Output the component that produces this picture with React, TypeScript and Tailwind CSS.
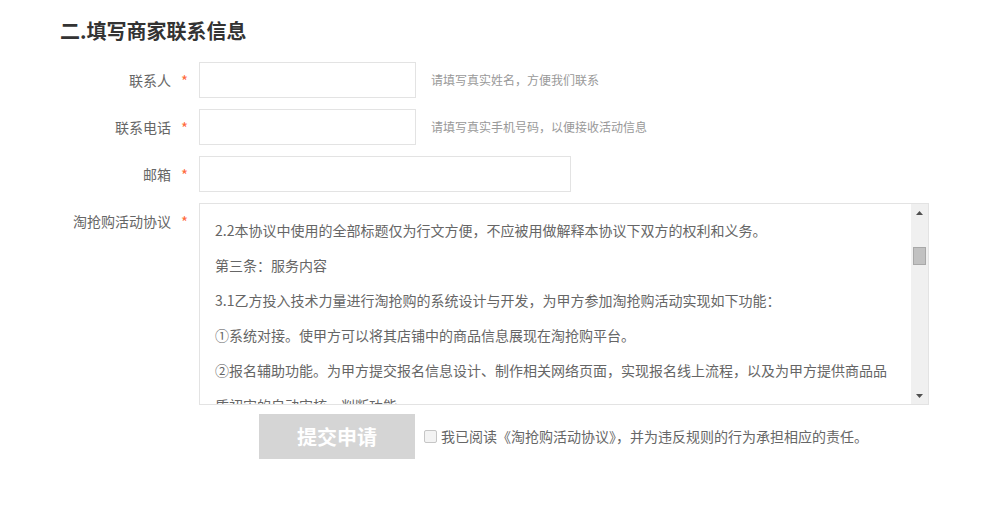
const font = {
  fontFamily: '"Noto Sans CJK SC", "Liberation Sans", sans-serif',
};

const fields = [
  { label: "联系人", width: "w-[217px]", hint: "请填写真实姓名，方便我们联系" },
  { label: "联系电话", width: "w-[217px]", hint: "请填写真实手机号码，以便接收活动信息" },
  { label: "邮箱", width: "w-[372px]", hint: "" },
];

const terms = [
  "2.2本协议中使用的全部标题仅为行文方便，不应被用做解释本协议下双方的权利和义务。",
  "第三条：服务内容",
  "3.1乙方投入技术力量进行淘抢购的系统设计与开发，为甲方参加淘抢购活动实现如下功能：",
  "①系统对接。使甲方可以将其店铺中的商品信息展现在淘抢购平台。",
  "②报名辅助功能。为甲方提交报名信息设计、制作相关网络页面，实现报名线上流程，以及为甲方提供商品品质初审的自动审核、判断功能。",
  "③活动展示。",
];

function Label({ text }: { text: string }) {
  return (
    <div className="w-[139px] shrink-0 flex justify-end items-center h-9 pr-[11px] text-[14px] text-[#666]">
      <span>{text}</span>
      <span className="ml-[10px] text-[15px] text-[#ff6a3c] leading-none">*</span>
    </div>
  );
}

function Scrollbar() {
  return (
    <div className="w-[17px] shrink-0 bg-[#f0f0f0] flex flex-col items-center">
      <div className="h-[17px] w-full flex items-center justify-center">
        <svg width="7" height="4" viewBox="0 0 7 4">
          <path d="M0 4 L3.5 0 L7 4 Z" fill="#505050" />
        </svg>
      </div>
      <div className="mt-[26px] w-[13px] h-[18px] bg-[#c1c1c1] border border-[#a8a8a8]" />
      <div className="flex-1" />
      <div className="h-[17px] w-full flex items-center justify-center">
        <svg width="7" height="4" viewBox="0 0 7 4">
          <path d="M0 0 L7 0 L3.5 4 Z" fill="#505050" />
        </svg>
      </div>
    </div>
  );
}

export default function App() {
  return (
    <div className="w-[988px] h-[518px] bg-white pl-[60px] pt-[16px]" style={font}>
      <h2 className="text-[20px] leading-[30px] font-bold text-[#333]">二.填写商家联系信息</h2>

      <div className="mt-[16px] flex flex-col gap-[11px]">
        {fields.map((f) => (
          <div key={f.label} className="flex items-center">
            <Label text={f.label} />
            <input
              className={`${f.width} h-9 border border-[#e3e3e3] outline-none px-2 text-[14px]`}
            />
            {f.hint && (
              <span className="ml-[15px] text-[12px] text-[#999]">{f.hint}</span>
            )}
          </div>
        ))}

        <div className="flex items-start">
          <Label text="淘抢购活动协议" />
          <div className="w-[730px] h-[202px] border border-[#e3e3e3] flex overflow-hidden">
            <div className="flex-1 overflow-hidden pl-[15px] pr-[14px] pt-[9px] text-[14px] leading-[35px] text-[#666]">
              {terms.map((t, i) => (
                <p key={i}>{t}</p>
              ))}
            </div>
            <Scrollbar />
          </div>
        </div>
      </div>

      <div className="mt-[9px] ml-[199px] flex items-center">
        <button className="w-[156px] h-[45px] bg-[#d5d5d5] text-white text-[20px] font-bold">
          提交申请
        </button>
        <label className="ml-[9px] flex items-center text-[14px] text-[#666]">
          <span className="w-[13px] h-[13px] border border-[#c6c6c6] rounded-[2px] bg-[#f3f3f3] mr-[4px]" />
          我已阅读《淘抢购活动协议》，并为违反规则的行为承担相应的责任。
        </label>
      </div>
    </div>
  );
}
